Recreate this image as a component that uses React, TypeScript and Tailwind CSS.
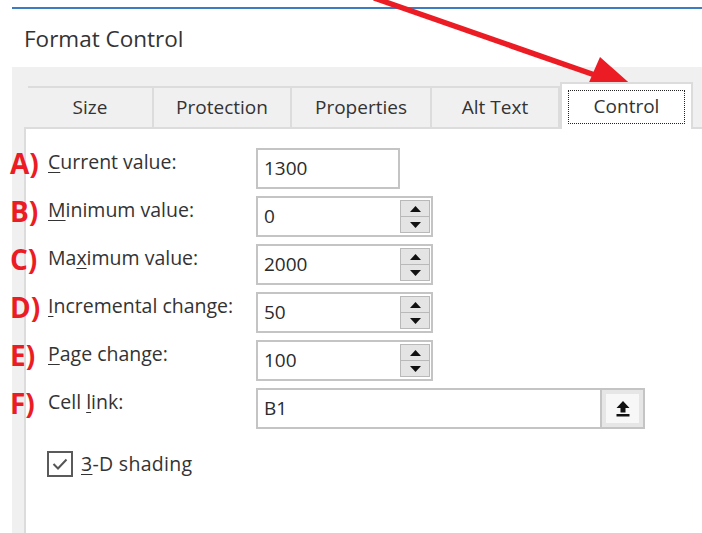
import type { ReactNode } from 'react';

type Row = {
  tag: string;
  label: [string, string, string];
  value: string;
  kind: 'plain' | 'spin' | 'ref';
};

const rows: Row[] = [
  { tag: 'A)', label: ['', 'C', 'urrent value:'], value: '1300', kind: 'plain' },
  { tag: 'B)', label: ['', 'M', 'inimum value:'], value: '0', kind: 'spin' },
  { tag: 'C)', label: ['Ma', 'x', 'imum value:'], value: '2000', kind: 'spin' },
  { tag: 'D)', label: ['', 'I', 'ncremental change:'], value: '50', kind: 'spin' },
  { tag: 'E)', label: ['', 'P', 'age change:'], value: '100', kind: 'spin' },
  { tag: 'F)', label: ['Cell ', 'l', 'ink:'], value: 'B1', kind: 'ref' },
];

const tabs = ['Size', 'Protection', 'Properties', 'Alt Text'];
const tabWidths = ['w-[126px]', 'w-[138px]', 'w-[140px]', 'w-[128px]'];

function Key({ children }: { children: ReactNode }) {
  return <span className="underline decoration-1 underline-offset-[3px]">{children}</span>;
}

function Spinner() {
  return (
    <div className="my-[2px] mr-[1px] ml-auto flex w-[30px] flex-col border border-[#b9b9b9] bg-[#e4e4e4]">
      <div className="flex flex-1 items-center justify-center border-b border-[#b9b9b9]">
        <svg width="11" height="6" viewBox="0 0 11 6">
          <polygon points="5.5,0 11,6 0,6" fill="#111" />
        </svg>
      </div>
      <div className="flex flex-1 items-center justify-center">
        <svg width="11" height="6" viewBox="0 0 11 6">
          <polygon points="0,0 11,0 5.5,6" fill="#111" />
        </svg>
      </div>
    </div>
  );
}

function RefButton() {
  return (
    <div className="ml-auto flex w-[43px] border-l-2 border-[#c4c4c4] bg-[#e6e6e6] p-[4px]">
      <div className="flex flex-1 items-center justify-center bg-[#f7f7f7]">
        <svg width="14" height="16" viewBox="0 0 14 16">
          <polygon points="7,0 13.5,7 9.5,7 9.5,11.5 4.5,11.5 4.5,7 0.5,7" fill="#111" />
          <rect x="0.5" y="13" width="13" height="2.5" fill="#111" />
        </svg>
      </div>
    </div>
  );
}

function Field({ row }: { row: Row }) {
  const width = row.kind === 'plain' ? 'w-[144px]' : row.kind === 'spin' ? 'w-[177px]' : 'w-[389px]';
  return (
    <div className={`flex h-[41px] ${width} border-2 border-[#c4c4c4] bg-white`}>
      <span className="self-center pl-[6px] text-[19px] text-[#2b2b2b]">{row.value}</span>
      {row.kind === 'spin' && <Spinner />}
      {row.kind === 'ref' && <RefButton />}
    </div>
  );
}

export default function App() {
  return (
    <div className="relative flex h-[533px] w-[702px] flex-col overflow-hidden bg-white font-['Open_Sans','Noto_Sans',sans-serif] text-[#333]">
      <div className="mt-[7px] ml-[12px] h-[2px] bg-[#3b7dc0]" />
      <h1 className="pt-[14px] pl-[24px] text-[22.5px] leading-[31px] text-[#333]">Format Control</h1>

      <div className="mt-[13px] ml-[12px] flex flex-1 flex-col bg-[#f0f0f0]">
        {/* tab strip */}
        <div className="flex h-[60px] items-end pl-[16px]">
          {tabs.map((t, i) => (
            <div
              key={t}
              className={`flex h-[41px] ${tabWidths[i]} items-center justify-center border-t-2 border-r-2 border-[#dcdcdc] pb-[1px] text-[19px]`}
            >
              {t}
            </div>
          ))}
          <div className="relative z-10 mb-[-2px] flex h-[47px] w-[133px] items-center justify-center border-x-2 border-t-2 border-[#dcdcdc] bg-white">
            <div className="flex h-[34px] w-[117px] items-center justify-center border border-dotted border-[#222] text-[19px]">
              Control
            </div>
          </div>
        </div>

        {/* control page */}
        <div className="ml-[12px] flex-1 border-t-2 border-l-2 border-[#dcdcdc] bg-white pt-[19px] pl-[22px]">
          <div className="flex flex-col gap-[7px]">
            {rows.map((r) => (
              <div key={r.tag} className="relative flex items-start">
                <span className="absolute top-[-3px] left-[-38px] text-[28px] leading-[36px] font-bold text-[#ec1c24]">
                  {r.tag}
                </span>
                <span className="w-[208px] pt-[1px] text-[19.5px] leading-[26px]">
                  {r.label[0]}
                  <Key>{r.label[1]}</Key>
                  {r.label[2]}
                </span>
                <Field row={r} />
              </div>
            ))}
          </div>

          <div className="mt-[20px] flex items-center gap-[8px]">
            <div className="ml-[-1px] flex h-[26px] w-[26px] items-center justify-center border-2 border-[#5a5a5a] bg-white">
              <svg width="16" height="12" viewBox="0 0 16 12">
                <polyline points="1.5,6 6,10.5 14.5,1.5" fill="none" stroke="#555" strokeWidth="2" />
              </svg>
            </div>
            <span className="text-[19.5px] tracking-[0.3px]">
              <Key>3</Key>-D shading
            </span>
          </div>
        </div>
      </div>

      {/* red callout arrow pointing at the Control tab */}
      <svg className="pointer-events-none absolute inset-0" width="702" height="533" viewBox="0 0 702 533">
        <line x1="374" y1="-2" x2="612" y2="81" stroke="#ec1c24" strokeWidth="5.5" />
        <polygon points="600,57 583,96 644,96" fill="#ec1c24" />
      </svg>
    </div>
  );
}
